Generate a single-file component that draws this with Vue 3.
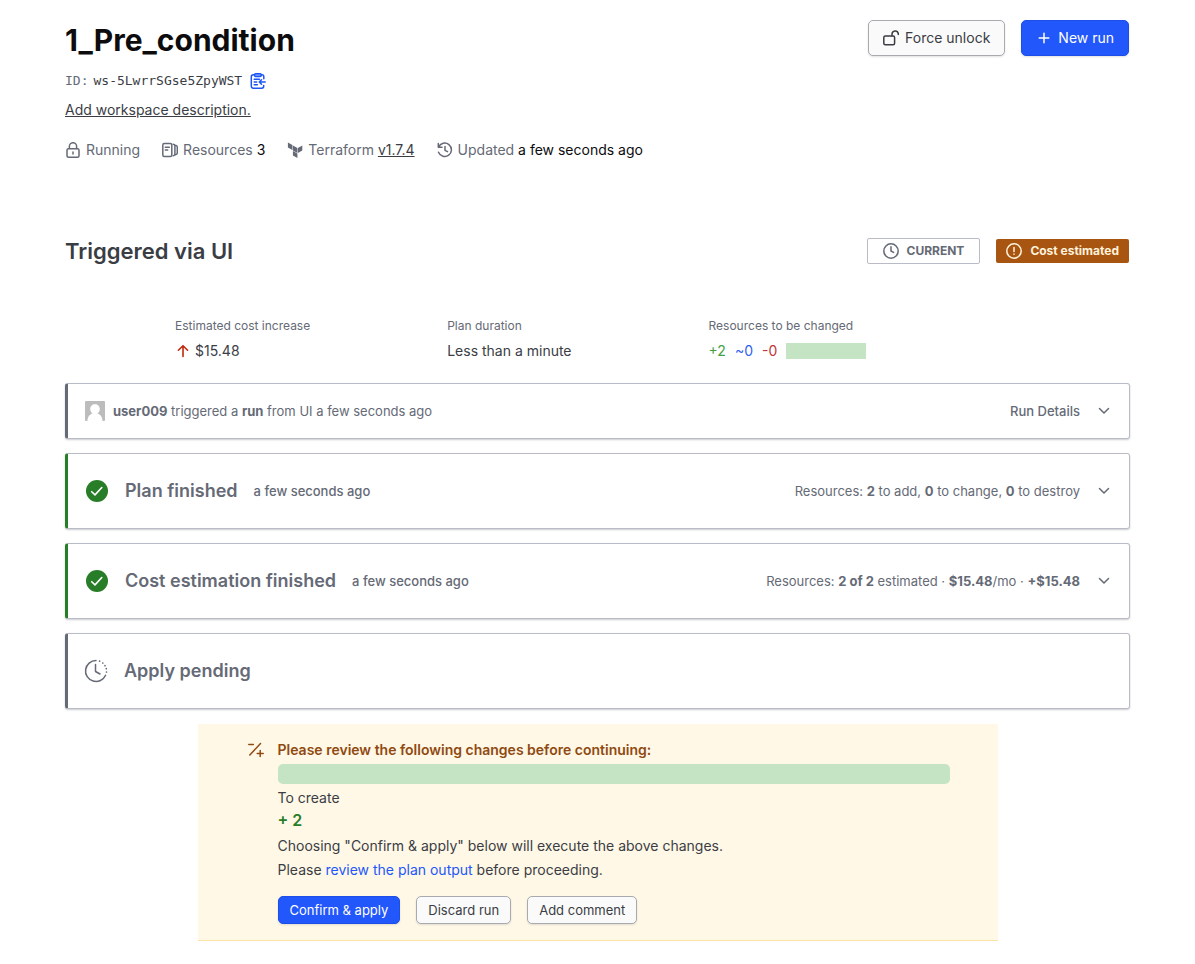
<script setup>
const cards = [
  {
    id: 'plan',
    title: 'Plan finished',
    time: 'a few seconds ago',
    summary: [
      { text: 'Resources: ' },
      { text: '2', strong: true },
      { text: ' to add, ' },
      { text: '0', strong: true },
      { text: ' to change, ' },
      { text: '0', strong: true },
      { text: ' to destroy' },
    ],
  },
  {
    id: 'cost',
    title: 'Cost estimation finished',
    time: 'a few seconds ago',
    summary: [
      { text: 'Resources: ' },
      { text: '2 of 2', strong: true },
      { text: ' estimated · ' },
      { text: '$15.48', strong: true },
      { text: '/mo · ' },
      { text: '+$15.48', strong: true },
    ],
  },
]
</script>

<template>
  <main class="page">
    <header class="head">
      <div class="head-info">
        <h1>1_Pre_condition</h1>
        <div class="ws-id">
          <span class="muted">ID:</span>
          <span>ws-5LwrrSGse5ZpyWST</span>
          <button class="icon-btn" type="button" aria-label="Copy workspace ID">
            <svg width="16" height="16" viewBox="0 0 16 16" fill="none" stroke="#1c57f5" stroke-width="1.5" stroke-linecap="round" stroke-linejoin="round">
              <path d="M4.5 1.8H3.2A1.9 1.9 0 0 0 1.3 3.7v9.6a1.9 1.9 0 0 0 1.9 1.9h8.6a1.9 1.9 0 0 0 1.9-1.9v-.8M11.3 1.8h.6a1.9 1.9 0 0 1 1.9 1.9v2" />
              <rect x="4.6" y=".8" width="6.6" height="2.6" rx="1" fill="#8eabfa" />
              <path d="M4.2 6.2h5.2M4.2 9h2.5M4.2 11.8h3.2M15.2 9H9.3M11.5 6.8 9.3 9l2.2 2.2" />
            </svg>
          </button>
        </div>
        <a class="desc" href="#">Add workspace description.</a>
        <ul class="meta">
          <li>
            <svg width="16" height="16" viewBox="0 0 16 16" fill="none" stroke="#656a76" stroke-width="1.5">
              <rect x="2" y="6.8" width="12" height="8.4" rx="1.5" />
              <path d="M4.4 6.8V4.3a3.6 3.6 0 0 1 7.2 0v2.5" />
              <path d="M8 10v2" stroke-linecap="round" />
            </svg>
            <span>Running</span>
          </li>
          <li>
            <svg width="16" height="16" viewBox="0 0 16 16" fill="none" stroke="#656a76" stroke-width="1.5" stroke-linecap="round" stroke-linejoin="round">
              <rect x=".8" y="1.6" width="9" height="12.8" rx="1.5" />
              <path d="M3.3 5.2h4M3.3 8h2.4M11.2 2.2c1.3.2 1.7.6 1.7 1.6v8.4c0 1-.4 1.4-1.7 1.6M13.9 3.4c1 .4 1.4.8 1.4 1.8v5.6c0 1-.4 1.4-1.4 1.8" />
            </svg>
            <span>Resources <b>3</b></span>
          </li>
          <li>
            <svg width="16" height="16" viewBox="0 0 16 16" fill="#656a76">
              <path d="M.9.6 5.4 3.1v5L.9 5.6zM5.9 3.4l4.5 2.5v5L5.9 8.4zM10.9 5.9l4.4-2.5v5l-4.4 2.5zM5.9 9.1l4.5 2.5v4.3l-4.5-2.5z" />
            </svg>
            <span>Terraform <a href="#">v1.7.4</a></span>
          </li>
          <li>
            <svg width="16" height="16" viewBox="0 0 16 16" fill="none" stroke="#656a76" stroke-width="1.5" stroke-linecap="round" stroke-linejoin="round">
              <path d="M1.3 1.5v3.7H5M1.6 5.1A6.7 6.7 0 1 1 1.5 10.3M8 4.5v3.8l2.5 1.3" />
            </svg>
            <span>Updated <b>a few seconds ago</b></span>
          </li>
        </ul>
      </div>
      <div class="head-actions">
        <button class="btn" type="button">
          <svg width="16" height="16" viewBox="0 0 16 16" fill="none" stroke="#3b3d45" stroke-width="1.5" stroke-linecap="round" stroke-linejoin="round">
            <rect x=".8" y="6" width="10.8" height="8.8" rx="1.5" />
            <path d="M9 5.800V4.200a3.200 3.200 0 0 1 6.300-.7v1" />
          </svg>
          <span>Force unlock</span>
        </button>
        <button class="btn primary" type="button">
          <svg width="16" height="16" viewBox="0 0 16 16" fill="none" stroke="#fff" stroke-width="1.5" stroke-linecap="round">
            <path d="M8 3.2v9.6M3.2 8h9.6" />
          </svg>
          <span>New run</span>
        </button>
      </div>
    </header>

    <section class="run-head">
      <h2>Triggered via UI</h2>
      <div class="badges">
        <span class="badge current">
          <svg width="16" height="16" viewBox="0 0 16 16" fill="none" stroke="#656a76" stroke-width="1.5" stroke-linecap="round" stroke-linejoin="round">
            <circle cx="8" cy="8" r="7.2" />
            <path d="M8 3.8V8l2.6 1.4" />
          </svg>
          CURRENT
        </span>
        <span class="badge cost">
          <svg width="16" height="16" viewBox="0 0 16 16" fill="none" stroke="#fff3dc" stroke-width="1.5" stroke-linecap="round">
            <circle cx="8" cy="8" r="7.2" />
            <path d="M8 4.6v3.8M8 11v.2" />
          </svg>
          Cost estimated
        </span>
      </div>
    </section>

    <dl class="stats">
      <div>
        <dt>Estimated cost increase</dt>
        <dd>
          <svg width="16" height="16" viewBox="0 0 16 16" fill="none" stroke="#c02a0c" stroke-width="1.6" stroke-linecap="round" stroke-linejoin="round">
            <path d="M8 13.4V3M3.4 7.2 8 2.7l4.6 4.5" />
          </svg>
          <span>$15.48</span>
        </dd>
      </div>
      <div>
        <dt>Plan duration</dt>
        <dd>Less than a minute</dd>
      </div>
      <div>
        <dt>Resources to be changed</dt>
        <dd class="changes">
          <span class="add">+2</span>
          <span class="mod">~0</span>
          <span class="del">-0</span>
          <span class="mini-bar"></span>
        </dd>
      </div>
    </dl>

    <section class="cards">
      <article class="card small">
        <svg width="20" height="20" viewBox="0 0 20 20">
          <rect width="20" height="20" rx="1" fill="#bcbcbc" />
          <path d="M10 3.2c2.9 0 4.8 2.1 4.8 4.8 0 2.2-1.1 3.8-2.4 4.6 2.8.8 4.8 3 5.2 7.4H2.4c.4-4.4 2.4-6.6 5.2-7.4C6.300 11.800 5.200 10.200 5.200 8c0-2.700 1.900-4.800 4.800-4.800z" fill="#fff" />
        </svg>
        <p><strong>user009</strong> triggered a <strong>run</strong> from UI a few seconds ago</p>
        <button class="toggle" type="button">
          <span class="medium">Run Details</span>
          <svg width="16" height="16" viewBox="0 0 16 16" fill="none" stroke="#656a76" stroke-width="1.5" stroke-linecap="round" stroke-linejoin="round">
            <path d="m3.5 5.5 4.5 4.5 4.5-4.5" />
          </svg>
        </button>
      </article>

      <article v-for="card in cards" :key="card.id" class="card done">
        <svg width="24" height="24" viewBox="0 0 24 24" fill="none">
          <circle cx="12" cy="12" r="11" fill="#287d28" />
          <path d="m6.7 12.7 3.3 3.2 6.8-7.4" stroke="#fff" stroke-width="1.6" stroke-linecap="round" stroke-linejoin="round" />
        </svg>
        <h3>{{ card.title }}</h3>
        <span class="medium">{{ card.time }}</span>
        <button class="toggle" type="button">
          <span><component :is="part.strong ? 'strong' : 'span'" v-for="(part, i) in card.summary" :key="i">{{ part.text }}</component></span>
          <svg width="16" height="16" viewBox="0 0 16 16" fill="none" stroke="#656a76" stroke-width="1.5" stroke-linecap="round" stroke-linejoin="round">
            <path d="m3.5 5.5 4.5 4.5 4.5-4.5" />
          </svg>
        </button>
      </article>

      <article class="card">
        <svg width="24" height="24" viewBox="0 0 24 24" fill="none" stroke="#656a76" stroke-width="1.5" stroke-linecap="round" stroke-linejoin="round">
          <path d="M12 1.5A10.500 10.500 0 1 0 21.600 16.300" />
          <path d="M15.6 2.1h.01M18.800 4h.01M21 6.700h.01M22.300 9.700h.01M22.500 13h.01" stroke-width="1.7" />
          <path d="M11.500 5.500v7l4.500 2.500" />
        </svg>
        <h3>Apply pending</h3>
      </article>
    </section>

    <section class="review">
      <svg class="review-icon" width="16" height="16" viewBox="0 0 16 16" fill="none" stroke="#8f4a12" stroke-width="1.5" stroke-linecap="round">
        <path d="M.8 2.5h4.5M12.500 1.500 1.800 13M12.200 8.500v6M9.200 11.500h6" />
      </svg>
      <div class="review-body">
        <h4>Please review the following changes before continuing:</h4>
        <div class="bar"></div>
        <p class="create">To create</p>
        <p class="count">+ 2</p>
        <p>Choosing "Confirm &amp; apply" below will execute the above changes.</p>
        <p>Please <a href="#">review the plan output</a> before proceeding.</p>
        <div class="review-actions">
          <button class="btn compact primary" type="button">Confirm &amp; apply</button>
          <button class="btn compact" type="button">Discard run</button>
          <button class="btn compact" type="button">Add comment</button>
        </div>
      </div>
    </section>
  </main>
</template>

<style>
body {
  margin: 0;
  background: #fff;
}
</style>

<style scoped>
.page {
  padding: 20px 65px 24px;
  font: 400 14px/20px Inter, "Liberation Sans", sans-serif;
  color: #3b3d45;
}
h1, h2, h3, h4, p, ul, dl, dd {
  margin: 0;
  padding: 0;
}
svg {
  display: block;
  flex: none;
}
button {
  font: inherit;
  color: inherit;
  cursor: pointer;
}
.head {
  display: flex;
  justify-content: space-between;
  align-items: flex-start;
  padding-right: 1px;
}
h1 {
  font-size: 30px;
  line-height: 40px;
  font-weight: 700;
  color: #0c0c0e;
}
.ws-id {
  display: flex;
  align-items: center;
  gap: 5px;
  margin-top: 11px;
  font: 13px/20px "DejaVu Sans Mono", monospace;
}
.muted {
  color: #656a76;
}
.icon-btn {
  margin-left: 3px;
  padding: 0;
  border: 0;
  background: none;
}
.desc {
  display: inline-block;
  margin-top: 9px;
  color: #3b3d45;
}
.meta {
  display: flex;
  gap: 22px;
  margin-top: 20px;
  list-style: none;
  color: #656a76;
}
.meta li {
  display: flex;
  align-items: center;
  gap: 5px;
}
.meta b {
  font-weight: 400;
  color: #0c0c0e;
}
.meta a {
  color: #3b3d45;
}
.head-actions {
  display: flex;
  gap: 16px;
}
.btn {
  display: flex;
  align-items: center;
  gap: 6px;
  height: 36px;
  padding: 0 14px;
  border: 1px solid #a9aab0;
  border-radius: 5px;
  background: #fafafa;
  color: #3b3d45;
  box-shadow: 0 1px 2px rgba(101, 106, 118, 0.2);
}
.btn.primary {
  border-color: #1c4fe6;
  background: #2257fb;
  color: #fff;
}
.btn.compact {
  height: 28px;
  padding: 0 11px;
  font-size: 13px;
}
.run-head {
  display: flex;
  justify-content: space-between;
  align-items: center;
  margin-top: 75px;
  padding-right: 1px;
}
h2 {
  font-size: 22px;
  line-height: 32px;
  font-weight: 600;
}
.badges {
  display: flex;
  align-items: center;
  gap: 16px;
}
.badge {
  display: flex;
  align-items: center;
  gap: 8px;
  height: 24px;
  padding: 0 10px;
  border-radius: 2px;
  font-size: 12px;
  font-weight: 700;
}
.current {
  padding: 0 15px;
  border: 1px solid #b9bbc6;
  color: #656a76;
}
.cost {
  background: #a95512;
  color: #fff3dc;
}
.stats {
  display: flex;
  gap: 137px;
  margin: 49px 0 22px;
  padding-left: 110px;
}
dt {
  font-size: 12px;
  color: #656a76;
}
dd {
  display: flex;
  align-items: center;
  gap: 4px;
  margin-top: 5px;
}
.changes {
  gap: 9px;
}
.add {
  color: #3fa13f;
}
.mod {
  color: #2f62f0;
}
.del {
  color: #c03538;
}
.mini-bar {
  width: 80px;
  height: 16px;
  background: #c4e4c3;
}
.cards {
  display: grid;
  gap: 14px;
}
.card {
  display: flex;
  align-items: center;
  gap: 16px;
  min-height: 74px;
  padding: 0 17px 0 16px;
  border: 1px solid #b9bbc6;
  border-left: 3px solid #656a76;
  border-radius: 3px;
  box-shadow: 0 1px 2px rgba(101, 106, 118, 0.35);
  font-size: 13px;
  color: #656a76;
}
.card.small {
  min-height: 54px;
  gap: 8px;
  padding-left: 17px;
}
.card.done {
  padding-left: 17px;
  border-left-color: #287d28;
}
.card strong {
  font-weight: 700;
}
h3 {
  font-size: 18px;
  line-height: 24px;
  font-weight: 600;
}
.medium {
  font-weight: 500;
}
.toggle {
  display: flex;
  align-items: center;
  gap: 16px;
  margin-left: auto;
  padding: 0;
  border: 0;
  background: none;
}
.review {
  display: flex;
  gap: 14px;
  box-sizing: border-box;
  max-width: 800px;
  margin: 15px auto 0;
  padding: 14px 48px 16px 50px;
  border-bottom: 1px solid #f9e4a6;
  background: #fff8e6;
  line-height: 24px;
}
.review-icon {
  margin-top: 4px;
}
.review-body {
  flex: 1;
}
h4 {
  font-size: 14px;
  font-weight: 600;
  color: #8f4a12;
}
.bar {
  height: 20px;
  margin: 2px 0;
  border-radius: 5px;
  background: #c4e4c3;
}
.create {
  margin-bottom: -2px;
}
.count {
  margin-bottom: 2px;
  font-size: 16px;
  font-weight: 600;
  color: #287d28;
}
.review a {
  color: #2257fb;
  text-decoration: none;
}
.review-actions {
  display: flex;
  gap: 16px;
  margin-top: 14px;
}
</style>
